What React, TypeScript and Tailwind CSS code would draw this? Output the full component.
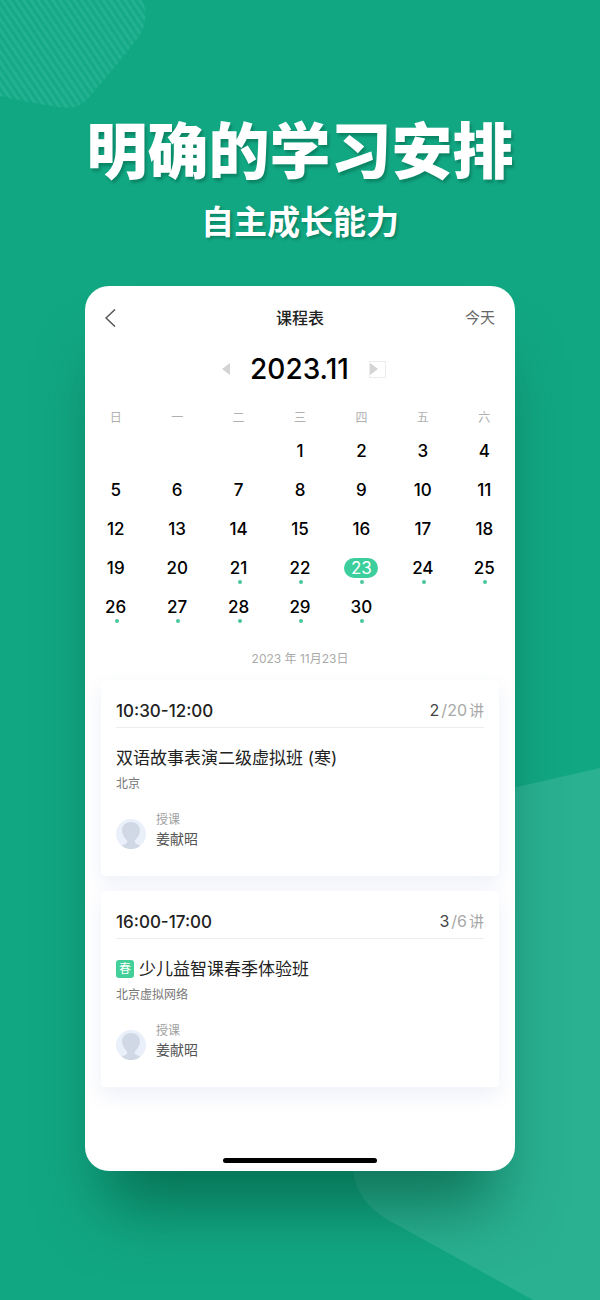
const weekdays = ["日", "一", "二", "三", "四", "五", "六"];

const weeks = [
	[null, null, null, 1, 2, 3, 4],
	[5, 6, 7, 8, 9, 10, 11],
	[12, 13, 14, 15, 16, 17, 18],
	[19, 20, 21, 22, 23, 24, 25],
	[26, 27, 28, 29, 30, null, null],
];

const selectedDay = 23;
const firstBusyDay = 21;

const lessons = [
	{
		time: "10:30-12:00",
		current: 2,
		total: 20,
		season: "",
		title: "双语故事表演二级虚拟班 (寒)",
		place: "北京",
		teacher: "姜献昭",
	},
	{
		time: "16:00-17:00",
		current: 3,
		total: 6,
		season: "春",
		title: "少儿益智课春季体验班",
		place: "北京虚拟网络",
		teacher: "姜献昭",
	},
];

function Backdrop() {
	return (
		<>
			<svg
				className="absolute top-0 left-0"
				width="150"
				height="112"
				viewBox="0 0 150 112"
				aria-hidden="true"
			>
				<defs>
					<pattern
						id="stripes"
						width="6"
						height="6"
						patternUnits="userSpaceOnUse"
						patternTransform="rotate(-34)"
					>
						<rect width="6" height="6" fill="#15a986" />
						<rect width="3" height="6" fill="#22b191" />
					</pattern>
				</defs>
				<path
					d="M0 0H143Q149 18 141 33Q136 42 92 94Q82 107 70 108Q50 107 0 96Z"
					fill="url(#stripes)"
				/>
			</svg>
			<svg
				className="absolute right-0 bottom-0"
				width="260"
				height="540"
				viewBox="0 0 260 540"
				aria-hidden="true"
			>
				<path
					d="M260 8L150 33Q110 43 94 84L14 390Q6 436 50 461L193 540H260Z"
					fill="#2ab192"
				/>
			</svg>
		</>
	);
}

function Calendar() {
	return (
		<table className="mt-6 w-full table-fixed text-center">
			<thead>
				<tr>
					{weekdays.map((day) => (
						<th
							key={day}
							scope="col"
							className="h-[18px] p-0 align-top text-xs leading-4 font-normal text-[#b0b0b0]"
						>
							{day}
						</th>
					))}
				</tr>
			</thead>
			<tbody>
				{weeks.map((week, i) => (
					<tr key={i}>
						{week.map((day, j) => (
							<td key={j} className="h-[39px] p-0 pt-[13px] align-top">
								{day && (
									<button
										type="button"
										className="flex w-full flex-col items-center text-[17px] leading-5 font-medium text-black"
									>
										<span
											className={
												day === selectedDay
													? "w-[34px] rounded-full bg-[#3ccf9d] font-normal text-white"
													: ""
											}
										>
											{day}
										</span>
										{day >= firstBusyDay && (
											<span className="mt-[2px] ml-[2px] size-1 rounded-full bg-[#48c79e]" />
										)}
									</button>
								)}
							</td>
						))}
					</tr>
				))}
			</tbody>
		</table>
	);
}

function Avatar() {
	return (
		<svg width="30" height="30" viewBox="0 0 30 30" aria-hidden="true">
			<circle cx="15" cy="15" r="15" fill="#e9f0fa" />
			<path
				d="M15 3C9.500 3 6 6.600 6 11.500C6 15.500 8.500 18.500 10.500 20.800C11.600 22.200 11.500 23.600 10.500 24.300C9 25.300 7.500 25.600 5.500 26.700A15 15 0 0 0 24.500 26.700C22.500 25.600 21 25.300 19.500 24.300C18.500 23.600 18.400 22.200 19.500 20.800C21.500 18.500 24 15.500 24 11.500C24 6.600 20.500 3 15 3Z"
				fill="#cfd8e4"
			/>
		</svg>
	);
}

function LessonCard({ lesson }: { lesson: (typeof lessons)[number] }) {
	return (
		<article className="rounded-sm bg-white px-[15px] pt-5 pb-[27px] shadow-[0_8px_20px_rgba(90,120,190,0.11)]">
			<div className="flex items-center justify-between border-b border-[#ececec] pb-[6px]">
				<h3 className="text-[17px] leading-5 font-medium text-[#222]">
					{lesson.time}
				</h3>
				<p className="text-base/5 text-[#a8a8a8]">
					<span className="mr-[2px] text-[#444]">{lesson.current}</span>/
					{lesson.total}
					<span className="ml-[2px] text-[15px]">讲</span>
				</p>
			</div>
			<h2 className="mt-[18px] flex items-center gap-[5px] text-[17px] leading-6 text-[#222]">
				{lesson.season && (
					<span className="flex size-[18px] items-center justify-center rounded-[3px] bg-[#43cf98] text-xs leading-4 text-white">
						{lesson.season}
					</span>
				)}
				{lesson.title}
			</h2>
			<p className="mt-1 text-xs leading-5 text-[#777]">{lesson.place}</p>
			<div className="mt-[18px] flex items-end gap-[10px]">
				<Avatar />
				<div>
					<p className="text-xs leading-4 text-[#a0a0a0]">授课</p>
					<p className="mt-px text-sm leading-5 text-[#555]">
						{lesson.teacher}
					</p>
				</div>
			</div>
		</article>
	);
}

export default function App() {
	return (
		<main className="relative min-h-screen overflow-hidden bg-[#12a783] px-[85px] pt-28 pb-32 font-['Inter','Noto_Sans_CJK_SC',sans-serif]">
			<Backdrop />

			<header className="relative -mx-10 text-center font-['Noto_Sans_CJK_SC',sans-serif] whitespace-nowrap text-white">
				<h1 className="text-[61px] leading-[72px] font-black [text-shadow:2px_3px_3px_rgba(0,90,65,0.45)]">
					明确的学习安排
				</h1>
				<p className="mt-[13px] text-[33px] leading-[46px] font-bold [text-shadow:2px_2px_3px_rgba(0,90,65,0.45)]">
					自主成长能力
				</p>
			</header>

			<section className="relative mt-[43px] rounded-[24px] bg-white pt-4 pb-2 shadow-[0_55px_65px_-20px_rgba(0,85,60,0.65)]">
				{/* Title bar */}
				<div className="grid h-8 grid-cols-3 items-center px-5">
					<button type="button" aria-label="返回">
						<svg
							width="11"
							height="18"
							viewBox="0 0 11 18"
							fill="none"
							stroke="#555"
							strokeWidth="1.5"
						>
							<path d="M10 0.500L1 9L10 17.500" />
						</svg>
					</button>
					<h2 className="text-center text-base font-medium text-[#222]">
						课程表
					</h2>
					<button type="button" className="text-right text-[15px] text-[#666]">
						今天
					</button>
				</div>

				{/* Month switcher */}
				<div className="mt-[18px] flex h-[34px] items-center justify-center pl-2">
					<button type="button" aria-label="上个月" className="mr-5">
						<svg width="8" height="12" viewBox="0 0 8 12">
							<path d="M8 0V12L0 6Z" fill="#d4d4d4" />
						</svg>
					</button>
					<p className="text-[28px] leading-8 font-medium text-black">
						2023.11
					</p>
					<button
						type="button"
						aria-label="下个月"
						className="ml-5 border border-[#ececec]"
					>
						<svg width="15" height="15" viewBox="0 0 15 15">
							<path d="M0 1V13L8 7Z" fill="#d4d4d4" />
						</svg>
					</button>
				</div>

				<Calendar />

				<p className="mt-[26px] text-center text-xs leading-5 text-[#aaa]">
					2023 年 11月23日
				</p>

				<div className="mx-4 mt-[11px] flex flex-col gap-[15px]">
					{lessons.map((lesson) => (
						<LessonCard key={lesson.time} lesson={lesson} />
					))}
				</div>

				<div className="mx-auto mt-[71px] h-[5px] w-[154px] rounded-full bg-black" />
			</section>
		</main>
	);
}
